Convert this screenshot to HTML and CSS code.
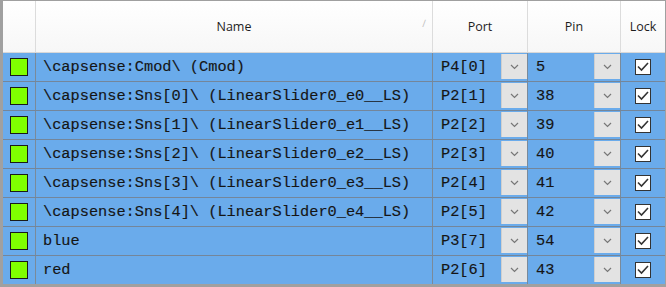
FILE: index.html
```html
<html>
<head>
    <title>Pins</title>
    <link rel="stylesheet" href="styles.css">
</head>
<body>
    <div class="grid">
        <div class="head">
            <div class="hcell"></div>
            <div class="hcell name">Name<span class="sort">&#x2215;</span></div>
            <div class="hcell">Port</div>
            <div class="hcell">Pin</div>
            <div class="hcell">Lock</div>
        </div>

        <div class="row">
            <div class="cell swatch"><span class="box"></span></div>
            <div class="cell txt">\capsense:Cmod\ (Cmod)</div>
            <div class="cell combo"><span>P4[0]</span><span class="drop"><svg width="9" height="6" viewBox="0 0 9 6"><path d="M1 1 L4.5 4.5 L8 1" fill="none" stroke="#777" stroke-width="1.2"/></svg></span></div>
            <div class="cell combo"><span>5</span><span class="drop"><svg width="9" height="6" viewBox="0 0 9 6"><path d="M1 1 L4.5 4.5 L8 1" fill="none" stroke="#777" stroke-width="1.2"/></svg></span></div>
            <div class="cell lock"><span class="check"><svg width="14" height="14" viewBox="0 0 14 14"><path d="M2 6.5 L5.5 10 L12 3" fill="none" stroke="#333" stroke-width="1.6"/></svg></span></div>
        </div>
        <div class="row">
            <div class="cell swatch"><span class="box"></span></div>
            <div class="cell txt">\capsense:Sns[0]\ (LinearSlider0_e0__LS)</div>
            <div class="cell combo"><span>P2[1]</span><span class="drop"><svg width="9" height="6" viewBox="0 0 9 6"><path d="M1 1 L4.5 4.5 L8 1" fill="none" stroke="#777" stroke-width="1.2"/></svg></span></div>
            <div class="cell combo"><span>38</span><span class="drop"><svg width="9" height="6" viewBox="0 0 9 6"><path d="M1 1 L4.5 4.5 L8 1" fill="none" stroke="#777" stroke-width="1.2"/></svg></span></div>
            <div class="cell lock"><span class="check"><svg width="14" height="14" viewBox="0 0 14 14"><path d="M2 6.5 L5.5 10 L12 3" fill="none" stroke="#333" stroke-width="1.6"/></svg></span></div>
        </div>
        <div class="row">
            <div class="cell swatch"><span class="box"></span></div>
            <div class="cell txt">\capsense:Sns[1]\ (LinearSlider0_e1__LS)</div>
            <div class="cell combo"><span>P2[2]</span><span class="drop"><svg width="9" height="6" viewBox="0 0 9 6"><path d="M1 1 L4.5 4.5 L8 1" fill="none" stroke="#777" stroke-width="1.2"/></svg></span></div>
            <div class="cell combo"><span>39</span><span class="drop"><svg width="9" height="6" viewBox="0 0 9 6"><path d="M1 1 L4.5 4.5 L8 1" fill="none" stroke="#777" stroke-width="1.2"/></svg></span></div>
            <div class="cell lock"><span class="check"><svg width="14" height="14" viewBox="0 0 14 14"><path d="M2 6.5 L5.5 10 L12 3" fill="none" stroke="#333" stroke-width="1.6"/></svg></span></div>
        </div>
        <div class="row">
            <div class="cell swatch"><span class="box"></span></div>
            <div class="cell txt">\capsense:Sns[2]\ (LinearSlider0_e2__LS)</div>
            <div class="cell combo"><span>P2[3]</span><span class="drop"><svg width="9" height="6" viewBox="0 0 9 6"><path d="M1 1 L4.5 4.5 L8 1" fill="none" stroke="#777" stroke-width="1.2"/></svg></span></div>
            <div class="cell combo"><span>40</span><span class="drop"><svg width="9" height="6" viewBox="0 0 9 6"><path d="M1 1 L4.5 4.5 L8 1" fill="none" stroke="#777" stroke-width="1.2"/></svg></span></div>
            <div class="cell lock"><span class="check"><svg width="14" height="14" viewBox="0 0 14 14"><path d="M2 6.5 L5.5 10 L12 3" fill="none" stroke="#333" stroke-width="1.6"/></svg></span></div>
        </div>
        <div class="row">
            <div class="cell swatch"><span class="box"></span></div>
            <div class="cell txt">\capsense:Sns[3]\ (LinearSlider0_e3__LS)</div>
            <div class="cell combo"><span>P2[4]</span><span class="drop"><svg width="9" height="6" viewBox="0 0 9 6"><path d="M1 1 L4.5 4.5 L8 1" fill="none" stroke="#777" stroke-width="1.2"/></svg></span></div>
            <div class="cell combo"><span>41</span><span class="drop"><svg width="9" height="6" viewBox="0 0 9 6"><path d="M1 1 L4.5 4.5 L8 1" fill="none" stroke="#777" stroke-width="1.2"/></svg></span></div>
            <div class="cell lock"><span class="check"><svg width="14" height="14" viewBox="0 0 14 14"><path d="M2 6.5 L5.5 10 L12 3" fill="none" stroke="#333" stroke-width="1.6"/></svg></span></div>
        </div>
        <div class="row">
            <div class="cell swatch"><span class="box"></span></div>
            <div class="cell txt">\capsense:Sns[4]\ (LinearSlider0_e4__LS)</div>
            <div class="cell combo"><span>P2[5]</span><span class="drop"><svg width="9" height="6" viewBox="0 0 9 6"><path d="M1 1 L4.5 4.5 L8 1" fill="none" stroke="#777" stroke-width="1.2"/></svg></span></div>
            <div class="cell combo"><span>42</span><span class="drop"><svg width="9" height="6" viewBox="0 0 9 6"><path d="M1 1 L4.5 4.5 L8 1" fill="none" stroke="#777" stroke-width="1.2"/></svg></span></div>
            <div class="cell lock"><span class="check"><svg width="14" height="14" viewBox="0 0 14 14"><path d="M2 6.5 L5.5 10 L12 3" fill="none" stroke="#333" stroke-width="1.6"/></svg></span></div>
        </div>
        <div class="row">
            <div class="cell swatch"><span class="box"></span></div>
            <div class="cell txt">blue</div>
            <div class="cell combo"><span>P3[7]</span><span class="drop"><svg width="9" height="6" viewBox="0 0 9 6"><path d="M1 1 L4.5 4.5 L8 1" fill="none" stroke="#777" stroke-width="1.2"/></svg></span></div>
            <div class="cell combo"><span>54</span><span class="drop"><svg width="9" height="6" viewBox="0 0 9 6"><path d="M1 1 L4.5 4.5 L8 1" fill="none" stroke="#777" stroke-width="1.2"/></svg></span></div>
            <div class="cell lock"><span class="check"><svg width="14" height="14" viewBox="0 0 14 14"><path d="M2 6.5 L5.5 10 L12 3" fill="none" stroke="#333" stroke-width="1.6"/></svg></span></div>
        </div>
        <div class="row">
            <div class="cell swatch"><span class="box"></span></div>
            <div class="cell txt">red</div>
            <div class="cell combo"><span>P2[6]</span><span class="drop"><svg width="9" height="6" viewBox="0 0 9 6"><path d="M1 1 L4.5 4.5 L8 1" fill="none" stroke="#777" stroke-width="1.2"/></svg></span></div>
            <div class="cell combo"><span>43</span><span class="drop"><svg width="9" height="6" viewBox="0 0 9 6"><path d="M1 1 L4.5 4.5 L8 1" fill="none" stroke="#777" stroke-width="1.2"/></svg></span></div>
            <div class="cell lock"><span class="check"><svg width="14" height="14" viewBox="0 0 14 14"><path d="M2 6.5 L5.5 10 L12 3" fill="none" stroke="#333" stroke-width="1.6"/></svg></span></div>
        </div>
    </div>
</body>
</html>
```

FILE: styles.css
```css
body {
    margin: 0;
    background: #a0a0a0;
    height: 287px;
    overflow: hidden;
}

.grid {
    width: 662px;
    border-left: 3px solid #a0a0a0;
    border-top: 1px solid #a0a0a0;
    border-right: 1px solid #a0a0a0;
    background: #a0a0a0;
}

.head,
.row {
    display: grid;
    grid-template-columns: 32px 396px 94px 92px 44px;
    column-gap: 1px;
}

.head {
    height: 51px;
    background: #dcdcdc;
}

.hcell {
    background: linear-gradient(to bottom, #ffffff, #f7f7f7);
    display: flex;
    align-items: center;
    justify-content: center;
    font-family: "Open Sans", "Noto Sans", sans-serif;
    font-size: 12.5px;
    color: #1e1e1e;
    position: relative;
}

.sort {
    position: absolute;
    right: 6px;
    top: 15px;
    font-size: 10px;
    color: #c0c0c0;
}

.row {
    height: 28px;
    border-top: 1px solid #74869a;
    background: #7a8a9a;
}

.head + .row {
    border-top: 1px solid #d8d8d8;
}

.cell {
    background: #6aabeb;
    display: flex;
    align-items: center;
    font-family: "Liberation Mono", monospace;
    font-size: 15.3px;
    color: #151515;
    -webkit-text-stroke: 0.15px #151515;
}

.swatch {
    justify-content: center;
}

.box {
    width: 16px;
    height: 16px;
    background: #80ff00;
    border: 1px solid #1a1a1a;
}

.txt {
    padding-left: 7px;
    white-space: pre;
}

.combo {
    padding-left: 8px;
    justify-content: space-between;
}

.drop {
    width: 25px;
    align-self: stretch;
    margin: 1px 0 2px 0;
    background: #e3e3e3;
    border-left: 1px solid #cfcfcf;
    display: flex;
    align-items: center;
    justify-content: center;
}

.lock {
    justify-content: center;
}

.check {
    width: 14px;
    height: 14px;
    background: #ffffff;
    border: 1px solid #333;
    display: flex;
}
```
